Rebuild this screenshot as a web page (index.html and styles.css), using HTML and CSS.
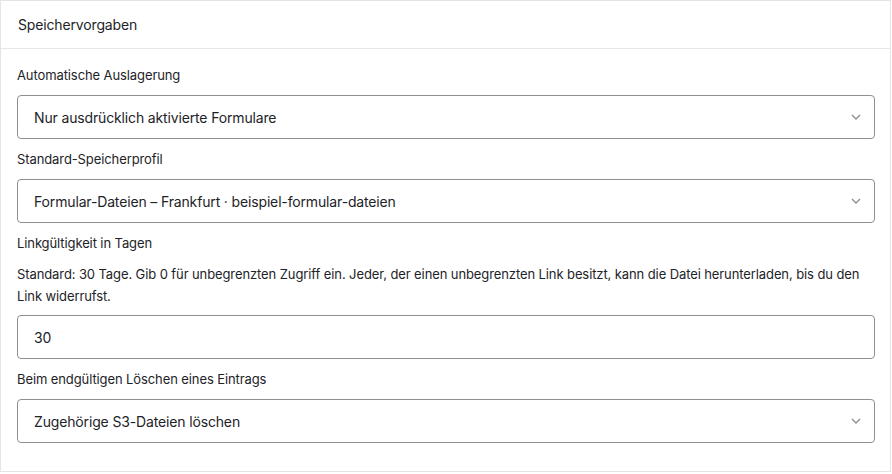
FILE: index.html
```html
<!DOCTYPE html>
<html lang="de">
<head>
<meta charset="utf-8">
<title>Speichervorgaben</title>
<link rel="stylesheet" href="styles.css">
</head>
<body>
<section class="card">
  <header class="card-header">Speichervorgaben</header>
  <div class="card-body">
    <div class="field">
      <label class="field-label">Automatische Auslagerung</label>
      <div class="select">
        <span>Nur ausdrücklich aktivierte Formulare</span>
        <svg class="chev" width="10" height="6" viewBox="0 0 10 6"><path d="M1 1l4 4 4-4" fill="none" stroke="#8a8d93" stroke-width="1.3"/></svg>
      </div>
    </div>
    <div class="field">
      <label class="field-label">Standard-Speicherprofil</label>
      <div class="select">
        <span>Formular-Dateien – Frankfurt · beispiel-formular-dateien</span>
        <svg class="chev" width="10" height="6" viewBox="0 0 10 6"><path d="M1 1l4 4 4-4" fill="none" stroke="#8a8d93" stroke-width="1.3"/></svg>
      </div>
    </div>
    <div class="field">
      <label class="field-label">Linkgültigkeit in Tagen</label>
      <p class="desc">Standard: 30 Tage. Gib 0 für unbegrenzten Zugriff ein. Jeder, der einen unbegrenzten Link besitzt, kann die Datei herunterladen, bis du den Link widerrufst.</p>
      <div class="input">30</div>
    </div>
    <div class="field">
      <label class="field-label">Beim endgültigen Löschen eines Eintrags</label>
      <div class="select">
        <span>Zugehörige S3-Dateien löschen</span>
        <svg class="chev" width="10" height="6" viewBox="0 0 10 6"><path d="M1 1l4 4 4-4" fill="none" stroke="#8a8d93" stroke-width="1.3"/></svg>
      </div>
    </div>
  </div>
</section>
</body>
</html>
```
FILE: styles.css
```css
html, body {
  margin: 0;
  padding: 0;
  background: #ffffff;
}
body {
  font-family: Inter, "Liberation Sans", sans-serif;
  color: #1d2327;
  -webkit-font-smoothing: antialiased;
}
.card {
  width: 891px;
  height: 472px;
  box-sizing: border-box;
  border: 1px solid #e2e4e7;
  background: #fff;
}
.card-header {
  height: 48px;
  box-sizing: border-box;
  border-bottom: 1px solid #e6e7ea;
  padding: 0 17px;
  display: flex;
  align-items: center;
  font-size: 14px;
  letter-spacing: -0.15px;
}
.card-body {
  padding: 16px 15px 0 16px;
}
.field {
  margin-bottom: 10px;
}
.field-label {
  display: block;
  font-size: 13px;
  line-height: 20px;
  margin-bottom: 10px;
  letter-spacing: -0.1px;
}
.select, .input {
  height: 44px;
  box-sizing: border-box;
  border: 1px solid #8c8f94;
  border-radius: 4px;
  display: flex;
  align-items: center;
  padding: 0 13px 0 16px;
  font-size: 14px;
  letter-spacing: -0.15px;
}
.select span {
  flex: 1;
}
.desc {
  margin: 0 0 8px 0;
  font-size: 13px;
  line-height: 22px;
  letter-spacing: -0.1px;
}
```
